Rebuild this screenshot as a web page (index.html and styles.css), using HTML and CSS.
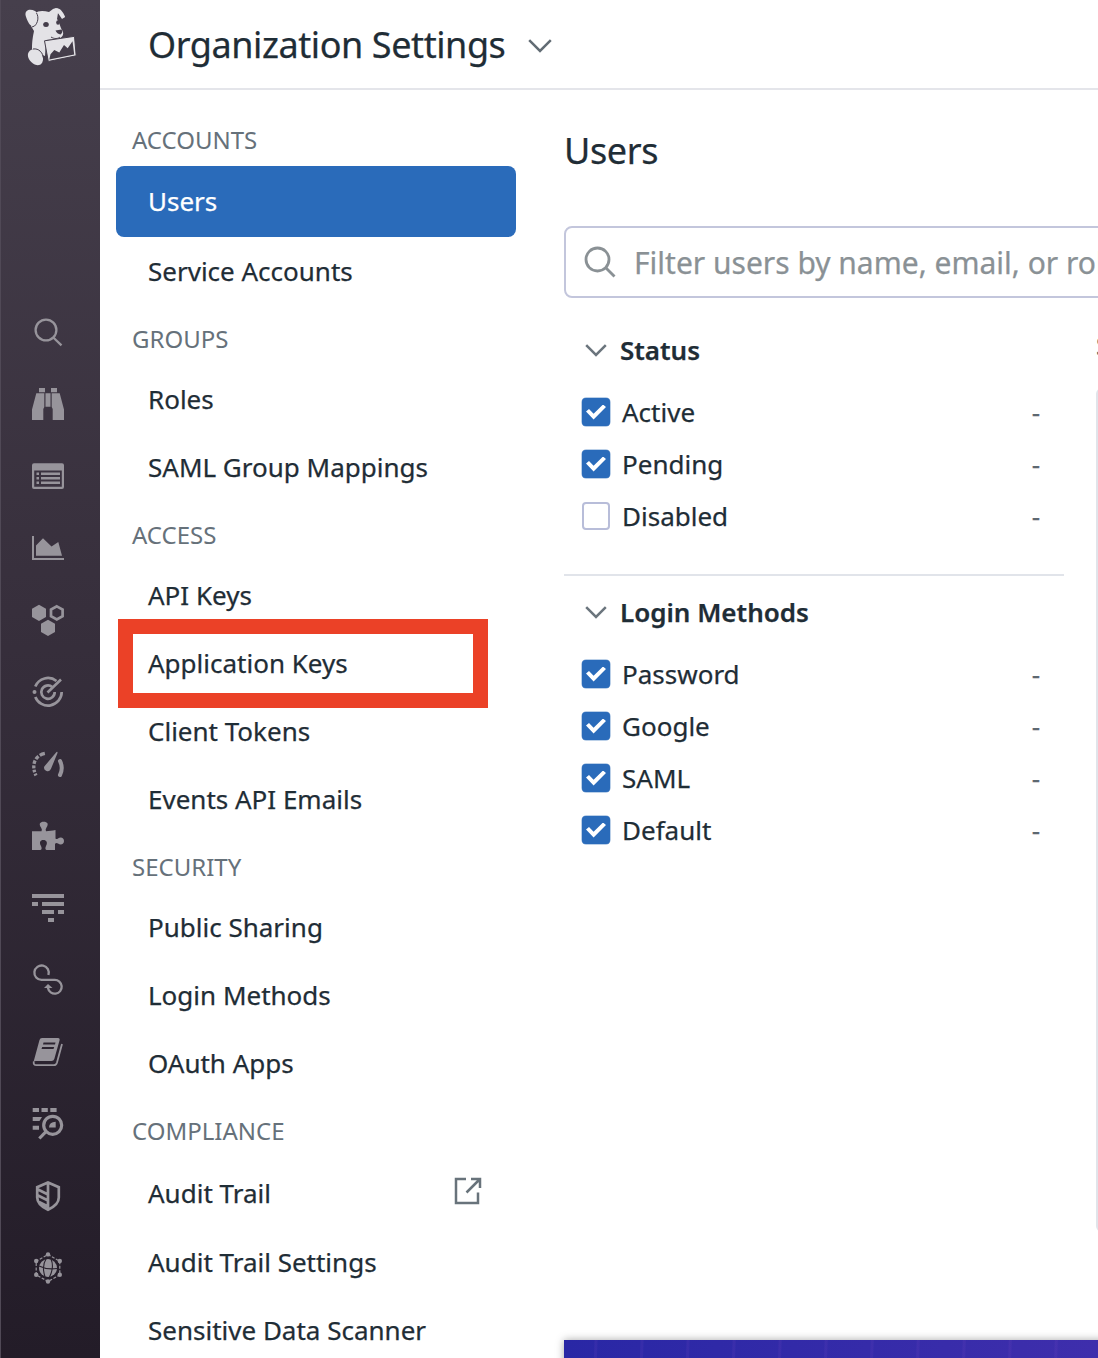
FILE: index.html
```html
<!DOCTYPE html>
<html lang="en">
<head>
<meta charset="utf-8">
<title>Organization Settings</title>
<link rel="stylesheet" href="styles.css">
</head>
<body>
<div class="app">
  <aside class="rail">
    <svg class="logo" viewBox="0 0 100 100">
      <path d="M35 14C38 10 44 11 49 12L53 9C57 7 60 10 61 12L65 17L62 19L58 13L57 19C60 23 60 27 62 30C65 34 62 38 58 39L46 40L45 56L42 55C40 51 37 50 34 51L32 49C32 41 33 36 34 31L31 26Z"/>
      <path d="M25.500 15C25 9 31 9 35 11C38 12 37.500 20 35 23.500C33 27 31 26 29 23.500C27 20 26 17 25.500 15Z"/>
      <path d="M55 8.500C60 7 63 12 65 16.500C64 19 61 17 59 14Z"/>
      <path d="M30 50.500C35 47 42 51 43 58C43.500 65 38 67 33 63.500C28 60 26 54 30 50.500Z"/>
      <path class="logo-line" d="M36.500 13C39 17 38 23 34.500 26L32 27M33 49C39 48 43 53 43.500 58M51 37C54 39 58 39 60 37"/>
      <ellipse class="logo-dark" cx="46" cy="24.500" rx="2.800" ry="2.500"/>
      <ellipse class="logo-dark" cx="58" cy="22.500" rx="1.800" ry="2.300"/>
      <path class="logo-dark" d="M55.500 30.500L61.500 29.500Q63.500 32 60.500 34.500Q57 34 55.500 30.500Z"/>
      <path class="logo-sign" d="M44.500 40.800L74.500 36.300L76.200 55.800L48.300 61.500Z"/>
      <path class="logo-dark" d="M49.300 59.500L50.500 54.300L54.300 50L59.300 52.500L64 45L67.700 48.300L72.500 41.200L74.200 54.600Z"/>
    </svg>
    <nav class="rail-nav">
      <a><svg viewBox="0 0 32 32"><g class="line"><circle cx="14" cy="14" r="10.400"/><path d="M21.300 21.500L29.500 29.300"/></g></svg></a>
      <a><svg viewBox="0 0 32 32"><path d="M7 0h6v4.200H7zM19 0h6v4.200h-6zM4.300 5.300H12.300V19L11.300 21V32H0V21.500ZM27.700 5.300H19.700V19L20.700 21V32H32V21.500ZM13.500 5.300h5v13.500h-5z"/></svg></a>
      <a><svg viewBox="0 0 32 32"><path fill-rule="evenodd" d="M2 3.300H30Q32 3.300 32 5.300V27Q32 29 30 29H2Q0 29 0 27V5.300Q0 3.300 2 3.300ZM2.200 10.500V26.800H29.800V10.500Z"/><path d="M4.500 12.500H7v2.400H4.500zM9 12.500h19v2.400H9zM4.500 17H7v2.400H4.500zM9 17h19v2.400H9zM4.500 21.500H7v2.400H4.500zM9 21.500h19v2.400H9z"/></svg></a>
      <a><svg viewBox="0 0 32 32"><path d="M0 4H2V26H32V28H0ZM4 23.700V13.500L11 6.300L19.500 14.500L26.300 10L30 23.700Z"/></svg></a>
      <a><svg viewBox="0 0 32 32"><path d="M7 .8L14 4.800V13L7 17L0 13V4.800ZM16 15.700L23 19.700V27.900L16 31.900L9 27.900V19.700Z"/><path class="line thick" d="M24.800 2.300L30.600 5.600V12.200L24.800 15.500L19 12.200V5.600Z"/></svg></a>
      <a><svg viewBox="0 0 32 32"><g class="line thick"><path d="M3.300 10.500A13.700 13.700 0 0 1 24.500 5M29.700 16A13.700 13.700 0 0 1 3.300 21M20.300 11A6.700 6.700 0 1 0 22.700 16M15.500 16.500L29 3.500"/></g><circle cx="2.500" cy="16" r="2"/></svg></a>
      <a><svg viewBox="0 0 32 32"><path class="line dash" d="M4 27.500C-1 18 2 5 17.500 5"/><path d="M12.300 18.500L24.500 4Q25.700 3.300 25.500 5L19 20.800A3.400 3.400 0 1 1 12.300 18.500Z"/><path class="line heavy" d="M28 13Q31.500 20 28 27"/></svg></a>
      <a><svg viewBox="0 0 32 32"><path d="M0 11.200H9.500Q10.500 9.500 9 7.500C6.500 4 8 1.800 11.700 1.800S17 4 14.500 7.500Q13 9.500 14 11.200L21 10.500L23.500 10V18.500Q24.500 19.500 26 18.500C29 16.500 32 18 32 21S29 25.500 26 23.500Q24 22.500 23 24V30H14.500Q12.500 29 14 26C16 22.500 14.500 20 11.300 20S7 22.500 9 26Q10.500 29 8.500 30H0Z"/></svg></a>
      <a><svg viewBox="0 0 32 32"><path d="M0 2h32v4H0zM0 10h6v4H0zM10 10h22v4H10zM10 18h12v4H10zM26 18h6v4h-6zM16 26h6v4h-6z"/></svg></a>
      <a><svg viewBox="0 0 32 32"><path class="line" d="M16.400 11A7.200 7.200 0 1 0 9.500 15.900H22.500A6.900 6.900 0 1 1 16 24V22"/><path d="M16 20L20.500 24H12Z"/></svg></a>
      <a><svg viewBox="0 0 32 32"><path fill-rule="evenodd" d="M10 2H26Q28.200 2 27.500 4.500L22.300 23Q21.700 25 19.500 25H4Q2.500 25 1.500 26L7.500 4Q8 2 10 2ZM11.500 6.500L11 8.500H23L23.500 6.500ZM10.200 11L9.500 13H21.500L22.200 11Z"/><path class="line book" d="M1.800 25.500Q1 29.200 4.500 29.200H22Q24.200 29.200 25 26.500L30 8"/></svg></a>
      <a><svg viewBox="0 0 32 32"><path d="M.7 0H7v4H.7zM9.500 0h6.300v4H9.500zM18.300 0h6.300v4h-6.300zM.7 9H10L7.500 13H.7zM.7 17.700H7v4H.7zM17 19.500Q17.200 14 23.700 13.800V19.500Z"/><circle class="line wide" cx="20.700" cy="17.300" r="9"/><path class="line wide" d="M14 23.700L7.300 30.500"/></svg></a>
      <a><svg viewBox="0 0 32 32"><path class="line thick" d="M16 2.500L26.800 7.200V17.500C26.800 23 22 27 16 29.700C10 27 5.200 23 5.200 17.500V7.200ZM16 2.500V29.500M6 9.500L16 14.500M6 15.500L16 20.500M7 22L16 26.500"/></svg></a>
      <a><svg viewBox="0 0 32 32"><path class="line net" d="M16 2.500L27.800 9.200V22.800L16 29.500L4.200 22.800V9.200Z"/><circle cx="16" cy="2.400" r="2.200"/><circle cx="27.800" cy="9" r="2.200"/><circle cx="27.800" cy="22.800" r="2.200"/><circle cx="16" cy="29.500" r="2.200"/><circle cx="4.200" cy="22.800" r="2.200"/><circle cx="4.200" cy="9" r="2.200"/><circle cx="16" cy="16" r="9"/><path class="gap" d="M7 14Q15 18 25 16.500M14 7Q9.500 14 13 25M19 7Q22.500 15 17.500 25"/></svg></a>
    </nav>
  </aside>
  <div class="page">
    <header class="topbar">
      <h1>Organization Settings</h1>
      <svg class="title-chevron" viewBox="0 0 24 14"><path d="M1.200 1.200L12 12L22.800 1.200"/></svg>
    </header>
    <div class="body">
      <nav class="settings">
        <h3>ACCOUNTS</h3>
        <a class="item active">Users</a>
        <a class="item">Service Accounts</a>
        <h3>GROUPS</h3>
        <a class="item">Roles</a>
        <a class="item">SAML Group Mappings</a>
        <h3>ACCESS</h3>
        <a class="item">API Keys</a>
        <a class="item marked">Application Keys</a>
        <a class="item">Client Tokens</a>
        <a class="item">Events API Emails</a>
        <h3>SECURITY</h3>
        <a class="item">Public Sharing</a>
        <a class="item">Login Methods</a>
        <a class="item">OAuth Apps</a>
        <h3>COMPLIANCE</h3>
        <a class="item external"><span>Audit Trail</span><svg viewBox="0 0 28 28"><path d="M12 2H2V26H24V15.500M17 2H26V11M25.500 2.500L12.500 15.500"/></svg></a>
        <a class="item">Audit Trail Settings</a>
        <a class="item">Sensitive Data Scanner</a>
      </nav>
      <main class="content">
        <h2>Users</h2>
        <div class="search">
          <svg viewBox="0 0 32 32"><circle cx="13.500" cy="13.500" r="11.500"/><path d="M22 22L30.500 30.500"/></svg>
          <span>Filter users by name, email, or role</span>
        </div>
        <div class="columns">
          <div class="facets">
            <section class="facet">
              <h4><svg viewBox="0 0 22 13"><path d="M1.200 1.200L11 11L20.800 1.200"/></svg>Status</h4>
              <div class="option"><i class="box on"></i><span>Active</span><b>-</b></div>
              <div class="option"><i class="box on"></i><span>Pending</span><b>-</b></div>
              <div class="option"><i class="box"></i><span>Disabled</span><b>-</b></div>
            </section>
            <section class="facet">
              <h4><svg viewBox="0 0 22 13"><path d="M1.200 1.200L11 11L20.800 1.200"/></svg>Login Methods</h4>
              <div class="option"><i class="box on"></i><span>Password</span><b>-</b></div>
              <div class="option"><i class="box on"></i><span>Google</span><b>-</b></div>
              <div class="option"><i class="box on"></i><span>SAML</span><b>-</b></div>
              <div class="option"><i class="box on"></i><span>Default</span><b>-</b></div>
            </section>
          </div>
          <div class="results">
            <div class="summary">S</div>
            <div class="table"></div>
          </div>
        </div>
        <div class="banner"></div>
      </main>
    </div>
  </div>
</div>
</body>
</html>
```
FILE: styles.css
```css
*, *::before, *::after { box-sizing: border-box; }
body { margin: 0; background: #fff; color: #1f2d36; font: 26px/36px "Noto Sans", sans-serif; -webkit-text-stroke: .25px; overflow: hidden; }
h1, h2, h3, h4 { margin: 0; font-weight: 400; }
svg { display: block; flex: none; }
.app { display: flex; width: 1098px; height: 1358px; overflow: hidden; }

.rail { flex: none; width: 100px; background: linear-gradient(#463f4c, #372f3c 45%, #231c28); border-left: 1px solid #504956; }
.logo { width: 100px; height: 100px; margin-left: -1px; fill: #e3e2e6; }
.logo-dark { fill: #443d4a; }
.logo-line { fill: none; stroke: #443d4a; stroke-width: 1; }
.logo-sign { fill: #e3e2e6; stroke: #443d4a; stroke-width: 1; }
.rail-nav { padding-top: 196px; }
.rail-nav a { display: flex; height: 72px; padding: 20px 0 0 31px; }
.rail-nav svg { width: 32px; height: 32px; fill: #97949b; overflow: visible; }
.rail-nav .line { fill: none; stroke: #97949b; stroke-width: 2.300; }
.rail-nav .thick { stroke-width: 2.700; }
.rail-nav .wide { stroke-width: 3.200; }
.rail-nav .heavy { stroke-width: 4; stroke-linecap: round; }
.rail-nav .dash { stroke-width: 3.300; stroke-dasharray: 2 1.500 2.500 1.500 3 1.500 3.500 1.500 4 1.500 5.500 9; }
.rail-nav .book { stroke-width: 1.800; }
.rail-nav .net { stroke-width: 1.200; stroke-dasharray: 3 1.500; }
.rail-nav .gap { fill: none; stroke: #27202c; stroke-width: 1.100; }

.page { flex: 1; min-width: 0; }
.topbar { display: flex; gap: 23px; height: 90px; padding: 20px 48px 0; border-bottom: 2px solid #e4e5ea; }
.topbar h1 { font-size: 36px; line-height: 50px; letter-spacing: -.42px; white-space: nowrap; }
.title-chevron { width: 24px; height: 14px; margin-top: 19px; fill: none; stroke: #626c74; stroke-width: 2.500; }
.body { display: flex; height: 1268px; }

.settings { flex: none; width: 416px; padding: 16px 0 0 16px; }
.settings h3 { height: 60px; padding: 15px 16px 0; color: #66717a; font-size: 24px; line-height: 36px; -webkit-text-stroke: 0; }
.settings h3:first-child { padding-top: 16px; }
.item { display: flex; align-items: center; height: 68px; padding: 0 32px 2px; white-space: nowrap; }
.item.active { height: 71px; margin-bottom: 1px; color: #fff; background: #2a6bba; border-radius: 8px; }
.item.marked { position: relative; }
.item.marked::after { content: ""; position: absolute; left: 2px; top: -11px; width: 370px; height: 89px; border: 15px solid #eb4127; }
.item.external { justify-content: space-between; height: 71px; }
.external svg { width: 28px; height: 28px; margin: -4px 2px 0 0; fill: none; stroke: #68737b; stroke-width: 2.500; }

.content { display: flex; flex-direction: column; flex: none; width: 1100px; padding: 36px 0 0 48px; }
.content h2 { flex: none; height: 100px; font-size: 36px; line-height: 50px; letter-spacing: -.4px; }
.search { display: flex; align-items: center; gap: 18px; flex: none; height: 72px; padding: 0 18px; border: 2px solid #c3c6dc; border-radius: 8px; color: #8a9195; font-size: 30px; }
.search svg { width: 32px; height: 32px; fill: none; stroke: #8a9195; stroke-width: 2.800; }
.search span { padding-top: 2px; }
.columns { display: flex; flex: none; gap: 32px; height: 1042px; }
.facets { width: 500px; }
.facet { padding: 27px 0 32px; }
.facet + .facet { padding-top: 11px; border-top: 2px solid #e1e4ea; }
.facet h4 { display: flex; align-items: center; gap: 13px; height: 50px; padding-left: 21px; font-weight: 600; }
.facet h4 svg { width: 22px; height: 13px; fill: none; stroke: #6b757d; stroke-width: 2.500; }
.facet .option:nth-child(2) { margin-top: 11px; }
.option { display: flex; align-items: center; height: 52px; padding: 0 24px 0 17px; }
.option span { flex: 1; padding-left: 11px; }
.option b { color: #5d6870; font-weight: 400; }
.box { display: grid; place-items: center; width: 28px; height: 28px; margin: 0 1px; border: 2px solid #b8bdd9; border-radius: 4px; }
.box.on { background: #2a6bba; border: 0; box-shadow: 0 0 0 .5px #79a1d2; }
.box.on::after { content: ""; width: 20px; height: 15px; background: #fff; clip-path: polygon(0 47%, 15% 30%, 38% 62%, 85% 0, 100% 17%, 38% 100%); }
.results { flex: 1; padding-top: 28px; }
.summary { height: 62px; line-height: 38px; color: #44505a; }
.table { height: 844px; border: 2px solid #e1e4ea; border-radius: 6px; }
.banner { flex: none; height: 60px; background: repeating-linear-gradient(92deg, transparent 0 30px, rgba(130, 80, 200, .12) 31px 33px, transparent 34px 46px), linear-gradient(90deg, #2927a5, #3e2eac 534px); box-shadow: 0 0 8px rgba(0, 0, 0, .35); }
```
